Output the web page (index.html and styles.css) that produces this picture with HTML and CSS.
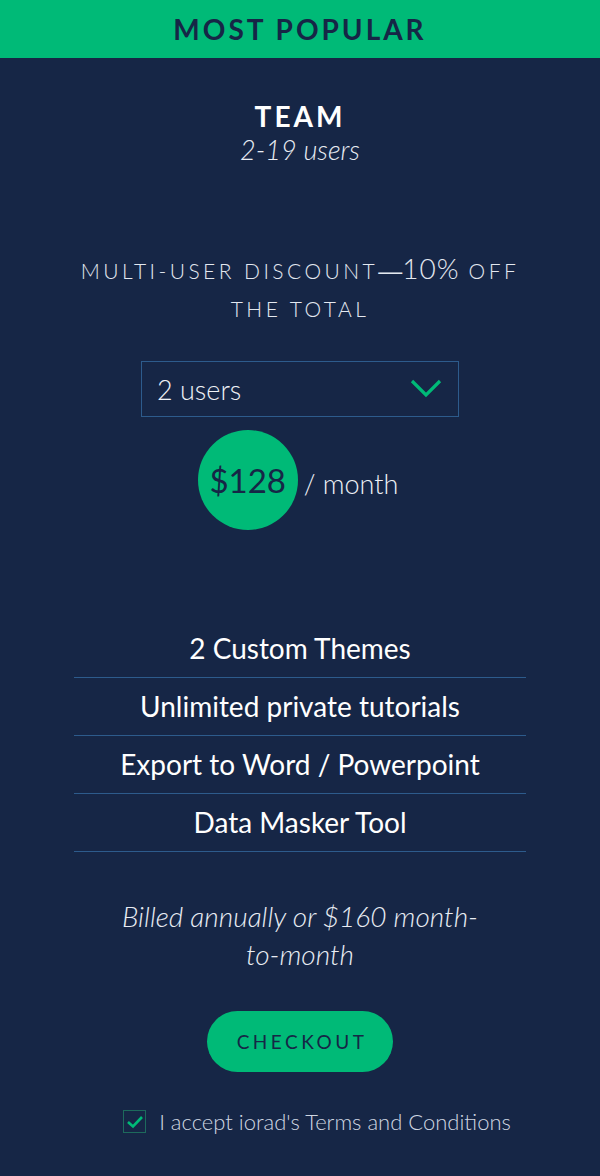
FILE: index.html
```html
<!DOCTYPE html>
<html lang="en">
<head>
<meta charset="utf-8">
<title>Team plan</title>
<link rel="stylesheet" href="styles.css">
</head>
<body>
<div class="plan">
  <div class="banner">MOST POPULAR</div>
  <div class="body">
    <h2 class="name">TEAM</h2>
    <p class="range">2-19 users</p>
    <p class="discount">MULTI-USER DISCOUNT<span class="dash">—</span><span class="pct">10%</span> OFF THE TOTAL</p>
    <div class="select">
      <span class="select-label">2 users</span>
      <svg class="chev" width="32" height="20" viewBox="0 0 32 20"><path d="M2 2 L16 16 L30 2" fill="none" stroke="#00ba77" stroke-width="3.2"/></svg>
    </div>
    <div class="price">
      <span class="bubble">$128</span>
      <span class="per">/ month</span>
    </div>
    <ul class="features">
      <li>2 Custom Themes</li>
      <li>Unlimited private tutorials</li>
      <li>Export to Word / Powerpoint</li>
      <li>Data Masker Tool</li>
    </ul>
    <p class="billed">Billed annually or $160 month-to-month</p>
    <button class="checkout">CHECKOUT</button>
    <label class="terms">
      <span class="box"><svg width="18" height="14" viewBox="0 0 18 14"><path d="M2 7 L7 11.5 L16 2" fill="none" stroke="#00ba77" stroke-width="2.6"/></svg></span>
      <span class="terms-text">I accept iorad's Terms and Conditions</span>
    </label>
  </div>
</div>
</body>
</html>
```
FILE: styles.css
```css
* { box-sizing: border-box; }
html, body { margin: 0; padding: 0; }
body {
  background: #162646;
  font-family: Lato, "Open Sans", sans-serif;
  color: #ffffff;
  width: 600px;
  height: 1176px;
  overflow: hidden;
}
.banner {
  height: 58px;
  background: #00ba77;
  color: #162646;
  font-weight: 700;
  font-size: 28px;
  letter-spacing: 3px;
  display: flex;
  align-items: center;
  justify-content: center;
}
.body {
  display: flex;
  flex-direction: column;
  align-items: center;
}
.name {
  margin: 42px 0 0;
  font-size: 28px;
  font-weight: 700;
  letter-spacing: 3px;
  line-height: 32px;
}
.range {
  margin: 2px 0 0;
  font-size: 27px;
  font-style: italic;
  font-weight: 300;
  line-height: 32px;
  color: #e8ecf3;
}
.discount {
  margin: 83px 0 0;
  width: 470px;
  text-align: center;
  font-size: 21px;
  font-weight: 300;
  letter-spacing: 3.45px;
  line-height: 38px;
  color: #e3e8f0;
}
.dash {
  font-family: "Liberation Sans", sans-serif;
  font-size: 24px;
  letter-spacing: 0;
}
.pct { font-size: 28px; letter-spacing: 1px; }
.select {
  margin-top: 33px;
  width: 318px;
  height: 56px;
  border: 1px solid #2d5b8c;
  display: flex;
  align-items: center;
  justify-content: space-between;
  padding: 0 16px 0 15px;
}
.select-label {
  font-size: 27px;
  font-weight: 300;
  color: #eef1f6;
}
.chev { display: block; }
.price {
  margin-top: 13px;
  display: flex;
  align-items: center;
  gap: 6px;
  margin-left: -4px;
}
.bubble {
  width: 100px;
  height: 100px;
  border-radius: 50%;
  background: #00ba77;
  color: #162646;
  display: flex;
  align-items: center;
  justify-content: center;
  font-size: 33px;
  font-weight: 400;
}
.per {
  font-size: 27px;
  font-weight: 300;
  color: #eef1f6;
  margin-top: 6px;
}
.features {
  list-style: none;
  margin: 90px 0 0;
  padding: 0;
  width: 452px;
}
.features li {
  height: 58px;
  border-bottom: 1px solid #2d5b8c;
  text-align: center;
  font-size: 28px;
  line-height: 57px;
  color: #ffffff;
}
.billed {
  margin: 45px 0 0;
  width: 366px;
  text-align: center;
  font-size: 28px;
  font-style: italic;
  font-weight: 300;
  line-height: 38px;
  color: #e8ecf3;
}
.checkout {
  margin-top: 38px;
  width: 186px;
  height: 61px;
  border: none;
  border-radius: 31px;
  background: #00ba77;
  color: #162646;
  font-family: inherit;
  font-size: 19px;
  letter-spacing: 3.5px;
  padding: 0 0 0 4px;
}
.terms {
  margin-top: 36px;
  margin-left: 34px;
  display: flex;
  align-items: center;
  gap: 13px;
}
.box {
  width: 23px;
  height: 23px;
  border: 1.5px solid #1d6a5c;
  display: flex;
  align-items: center;
  justify-content: center;
}
.terms-text {
  font-size: 22px;
  font-weight: 300;
  color: #cfd6e2;
}
```
